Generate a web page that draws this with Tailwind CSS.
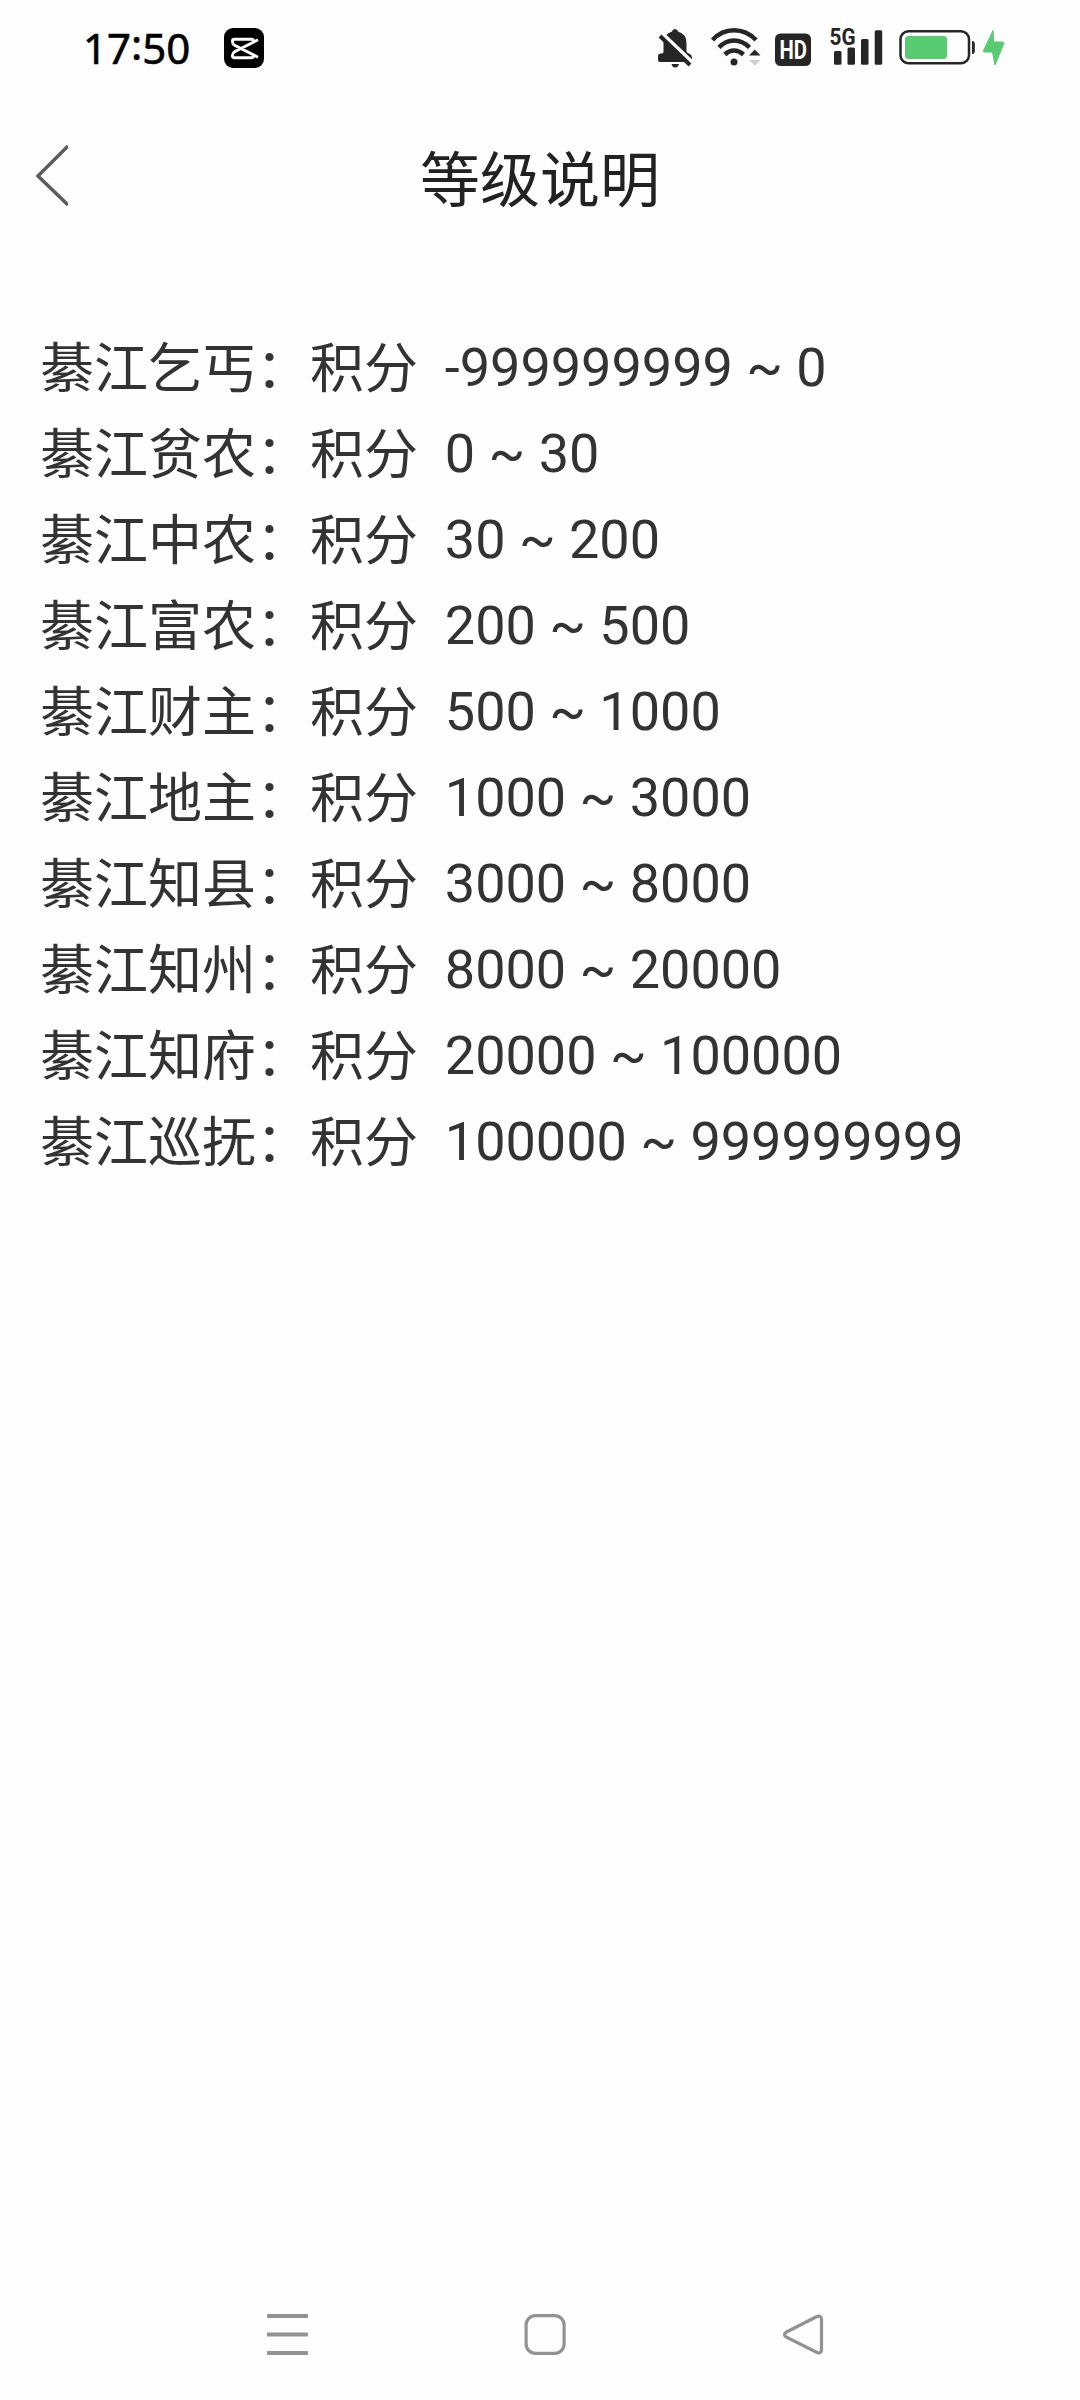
<!DOCTYPE html>
<html lang="zh-CN">
<head>
<meta charset="utf-8">
<title>等级说明</title>
<script src="https://cdn.jsdelivr.net/npm/@tailwindcss/browser@4"></script>
</head>
<body class="bg-[#fefefe]">
<div class="flex h-[2400px] w-[1080px] flex-col bg-[#fefefe] font-['Roboto','Noto_Sans_CJK_SC',sans-serif] text-[#333333]">
  <!-- Status bar -->
  <header class="flex h-24 items-center pl-[83px] pr-[74px] text-[#262626]">
    <span class="flex w-[141px] font-['Noto_Sans',sans-serif] text-[42px] font-normal leading-none text-black [-webkit-text-stroke:0.6px_black]"><span>17</span><span class="-translate-y-1">:</span><span>50</span></span>
    <svg class="h-10 w-10" viewBox="224 28 40 40">
      <rect x="224" y="28" width="40" height="40" rx="9" fill="#000"/>
      <path d="M258 39.800L235 51.500Q232.500 53 232.500 55V56Q232.500 57.700 234.500 57.700H251.500Q253.500 57.700 253.500 55.500M258 57.200L235 45.500Q232.500 44 232.500 42V41Q232.500 39.300 234.500 39.300H251.500Q253.500 39.300 253.500 41.500" fill="none" stroke="#fff" stroke-width="2.900"/>
    </svg>
    <div class="ml-auto flex items-center">
      <svg class="h-11 w-[38px]" viewBox="656 26 38 44" fill="#262626">
        <path d="M663.500 52V43Q663.500 34 672 31.500Q672.500 29 675 29Q677.500 29 678 31.500Q686.500 34 686.500 43V51.500Q687 53 690 54Q692 55 692 58V60Q692 62 690 62H660Q658 62 658 60V56Q658 53.500 661 53.500Q663.500 53.500 663.500 52Z"/>
        <path d="M671.500 64H679Q678 67.500 675.200 67.500Q672.500 67.500 671.500 64Z"/>
        <path d="M662 33.500L693 63" stroke="#fefefe" stroke-width="4" fill="none"/>
        <path d="M660 36L690 65" stroke="#262626" stroke-width="4" fill="none"/>
      </svg>
      <svg class="ml-4 h-11 w-[53px]" viewBox="710 26 53 44">
        <g fill="none" stroke="#262626" stroke-width="4.500">
          <path d="M712.500 40Q721.500 30.300 734 30.300T756 40"/>
          <path d="M719 47.500Q725.500 40.500 734 40.500T749.500 47.500"/>
          <path d="M724.800 54.500Q729 50.500 734 50.500T743.500 54.500"/>
        </g>
        <circle cx="734" cy="62" r="3.500" fill="#262626"/>
        <path d="M749 55.500L754.800 49.500L760.500 55.500Z" fill="#262626"/>
        <path d="M749 60L754.800 65.700L760.500 60Z" fill="#cfcfcf"/>
      </svg>
      <svg class="ml-3 h-11 w-9 overflow-visible" viewBox="775 26 36 44">
        <rect x="775" y="33.500" width="36" height="32.500" rx="5.500" fill="#262626"/>
        <text x="779.500" y="59" textLength="27.500" lengthAdjust="spacingAndGlyphs" font-family="Roboto" font-weight="700" font-size="25.500" fill="#fefefe">HD</text>
      </svg>
      <svg class="ml-[17px] h-11 w-[56px] overflow-visible" viewBox="828 26 56 44" fill="#262626">
        <text x="829.500" y="45.300" textLength="26" lengthAdjust="spacingAndGlyphs" font-family="Roboto" font-weight="700" font-size="23">5G</text>
        <rect x="834" y="51" width="7.500" height="13.700" rx="1.500"/>
        <rect x="847.500" y="47.500" width="7.500" height="17.200" rx="1.500"/>
        <rect x="861" y="39" width="7.500" height="25.700" rx="1.500"/>
        <rect x="874.700" y="30.300" width="7.500" height="34.400" rx="1.500"/>
      </svg>
      <svg class="ml-[14px] h-11 w-[108px]" viewBox="898 26 108 44">
        <rect x="900.500" y="31.200" width="68.500" height="32" rx="8" fill="none" stroke="#262626" stroke-width="2.500"/>
        <rect x="905" y="36" width="42" height="23" rx="3.500" fill="#58ca6f"/>
        <path d="M972 41Q974.800 41 974.800 44V51Q974.800 54 972 54Z" fill="#262626"/>
        <path d="M993 30.500L983.500 50.500Q983 52 984.500 52H992.500L995 65L1003.800 43.500Q1004 42 1002.500 42H993.500Z" fill="#58ca6f" stroke="#58ca6f" stroke-width="1" stroke-linejoin="round"/>
      </svg>
    </div>
  </header>

  <!-- Title bar -->
  <nav class="flex h-[168px] items-center">
    <div class="w-[300px] pl-[35px]">
      <svg class="mb-2 h-16 w-[33px]" viewBox="0 0 33 64" fill="none" stroke="#5c5c5c" stroke-width="3.500">
        <path d="M33 2L3 32L33 61"/>
      </svg>
    </div>
    <h1 class="w-[480px] pt-1 text-center text-[60px] leading-[88px] text-[#222222]">等级说明</h1>
  </nav>

  <!-- Level list -->
  <main class="flex-1 whitespace-nowrap pl-10 pt-[61px] text-[54px] leading-[86px] [&_span]:inline-block [&_span]:translate-y-0.5">
    <p><span>綦江乞丐：积分</span>&nbsp; -999999999 ~ 0</p>
    <p><span>綦江贫农：积分</span>&nbsp; 0 ~ 30</p>
    <p><span>綦江中农：积分</span>&nbsp; 30 ~ 200</p>
    <p><span>綦江富农：积分</span>&nbsp; 200 ~ 500</p>
    <p><span>綦江财主：积分</span>&nbsp; 500 ~ 1000</p>
    <p><span>綦江地主：积分</span>&nbsp; 1000 ~ 3000</p>
    <p><span>綦江知县：积分</span>&nbsp; 3000 ~ 8000</p>
    <p><span>綦江知州：积分</span>&nbsp; 8000 ~ 20000</p>
    <p><span>綦江知府：积分</span>&nbsp; 20000 ~ 100000</p>
    <p><span>綦江巡抚：积分</span>&nbsp; 100000 ~ 999999999</p>
  </main>

  <!-- System navigation -->
  <footer class="flex h-[132px] items-center justify-between pl-[266px] pr-[256px]">
    <svg class="h-[42px] w-[42px]" viewBox="0 0 42 42" fill="#929292">
      <rect x="1" y="1" width="41" height="4" rx="1"/>
      <rect x="1" y="19.500" width="41" height="4" rx="1"/>
      <rect x="1" y="38" width="41" height="4" rx="1"/>
    </svg>
    <svg class="h-[42px] w-[42px]" viewBox="0 0 42 42" fill="none" stroke="#929292" stroke-width="3.200">
      <rect x="2.100" y="2.600" width="38" height="37.800" rx="9.500"/>
    </svg>
    <svg class="h-[42px] w-[42px]" viewBox="0 0 42 42" fill="none" stroke="#929292" stroke-width="3.200">
      <path d="M35 3.500L4 19.200Q1 21.500 4 24L35 39.500Q39.500 41 39.500 36.500V6.500Q39.500 2 35 3.500Z"/>
    </svg>
  </footer>
</div>
</body>
</html>
